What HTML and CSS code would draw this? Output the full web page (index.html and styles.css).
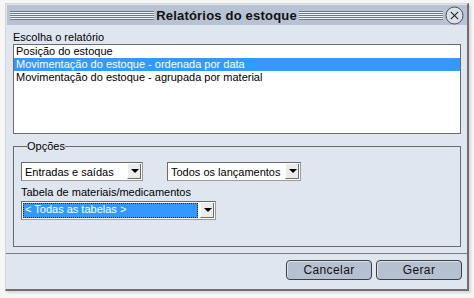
FILE: index.html
```html
<html>
    <head>
        <title>Relatórios do estoque</title>
        <link rel="stylesheet" href="styles.css">
    </head>
    <body>

        <div class="window">
            <div class="titlebar">
                <div class="grip"></div>
                <div class="title">Relatórios do estoque</div>
                <div class="grip"></div>
                <svg class="close" width="19" height="19" viewBox="0 0 19 19">
                    <circle cx="9.5" cy="9.5" r="8.5" fill="#dde2ea" stroke="#4a4e53" stroke-width="1"/>
                    <path d="M5.8 5.8 L13.2 13.2 M13.2 5.8 L5.8 13.2" stroke="#2a2d30" stroke-width="1.2"/>
                </svg>
            </div>

            <div class="content">
                <div class="label">Escolha o relatório</div>
                <div class="listbox">
                    <div class="item">Posição do estoque</div>
                    <div class="item selected">Movimentação do estoque - ordenada por data</div>
                    <div class="item">Movimentação do estoque - agrupada por material</div>
                </div>

                <fieldset class="group">
                    <legend>Opções</legend>
                    <div class="row">
                        <div class="combo combo-small">
                            <span class="combo-text">Entradas e saídas</span>
                            <span class="combo-btn"></span>
                        </div>
                        <div class="combo combo-medium">
                            <span class="combo-text">Todos os lançamentos</span>
                            <span class="combo-btn"></span>
                        </div>
                    </div>
                    <div class="label field-label">Tabela de materiais/medicamentos</div>
                    <div class="combo combo-wide focused">
                        <span class="combo-text">&lt; Todas as tabelas &gt;</span>
                        <span class="combo-btn"></span>
                    </div>
                </fieldset>
            </div>

            <div class="buttons">
                <button class="btn">Cancelar</button>
                <button class="btn">Gerar</button>
            </div>
        </div>

    </body>
</html>
```

FILE: styles.css
```css
body {
    margin: 0;
    background-color: #f6f6f6;
    font-family: "Liberation Sans", Arial, sans-serif;
    font-size: 11px;
    color: #000;
}

.window {
    margin: 3px 0 0 5px;
    width: 461px;
    height: 285px;
    background-color: #dfe6f0;
    border-top: 1px solid #d6d6d6;
    border-left: 1px solid #d6d6d6;
    border-right: 2px solid #6f6f6f;
    border-bottom: 2px solid #6f6f6f;
    box-shadow: 2px 2px 2px #d8d8d8;
    display: flex;
    flex-direction: column;
}

.titlebar {
    height: 20px;
    margin-top: 1px;
    margin-left: 1px;
    background-color: #b7c2d2;
    display: flex;
    align-items: center;
    padding: 0 3px 0 3px;
}

.grip {
    flex: 1;
    height: 9px;
    background: repeating-linear-gradient(to bottom, #6f7884 0, #6f7884 1px, #eef1f5 1px, #eef1f5 2px);
}

.title {
    font-weight: bold;
    font-size: 13px;
    letter-spacing: 0.2px;
    padding: 0 2px;
    color: #111;
}

.close {
    margin-left: 2px;
    margin-top: 1px;
}

.content {
    padding: 6px 6px 0 7px;
}

.label {
    line-height: 13px;
}

.listbox {
    height: 88px;
    background-color: #fff;
    border: 1px solid #6b6b6b;
}

.item {
    line-height: 13px;
    padding-left: 2px;
    white-space: nowrap;
}

.item.selected {
    background-color: #3399ff;
    color: #fff;
}

.group {
    margin: 6px 0 0 0;
    padding: 9px 7px 0 7px;
    height: 96px;
    border: 1px solid #6b6b6b;
}

.group legend {
    padding: 0;
    margin-left: 6px;
    line-height: 13px;
}

.row {
    display: flex;
    gap: 24px;
}

.combo {
    height: 17px;
    background-color: #fff;
    border: 1px solid #6b6b6b;
    border-right-color: #9a9a9a;
    border-bottom-color: #9a9a9a;
    display: flex;
    align-items: center;
    font-size: 11px;
}

.combo-small {
    width: 120px;
}

.combo-medium {
    width: 132px;
}

.combo-wide {
    width: 193px;
}

.combo-text {
    flex: 1;
    padding-left: 3px;
    white-space: nowrap;
    overflow: hidden;
}

.combo-btn {
    width: 14px;
    height: 15px;
    margin-right: 1px;
    background-color: #ececec;
    border-left: 1px solid #fff;
    border-right: 1px solid #6b6b6b;
    border-bottom: 1px solid #6b6b6b;
    box-sizing: border-box;
    position: relative;
}

.combo-btn::after {
    content: "";
    position: absolute;
    left: 3px;
    top: 5px;
    border-left: 4px solid transparent;
    border-right: 4px solid transparent;
    border-top: 4px solid #000;
}

.field-label {
    margin-top: 5px;
    margin-bottom: 2px;
}

.combo-wide .combo-text {
    background-color: #3399ff;
    color: #fff;
    align-self: stretch;
    margin: 1px 2px 1px 1px;
    padding-left: 2px;
    line-height: 13px;
    outline: 1px dotted #222;
    outline-offset: -1px;
}

.buttons {
    margin-top: 6px;
    border-top: 1px solid #7b7b7b;
    display: flex;
    justify-content: flex-end;
    gap: 4px;
    padding: 6px 5px 0 0;
}

.btn {
    height: 20px;
    width: 86px;
    background-color: #b5c1d1;
    border: 1px solid #3c3f44;
    border-radius: 4px;
    font-family: "Liberation Sans", Arial, sans-serif;
    font-size: 12px;
    letter-spacing: 0.4px;
    color: #111;
    padding: 0;
    box-shadow: inset 1px 1px 0 #dde3eb;
}
```
